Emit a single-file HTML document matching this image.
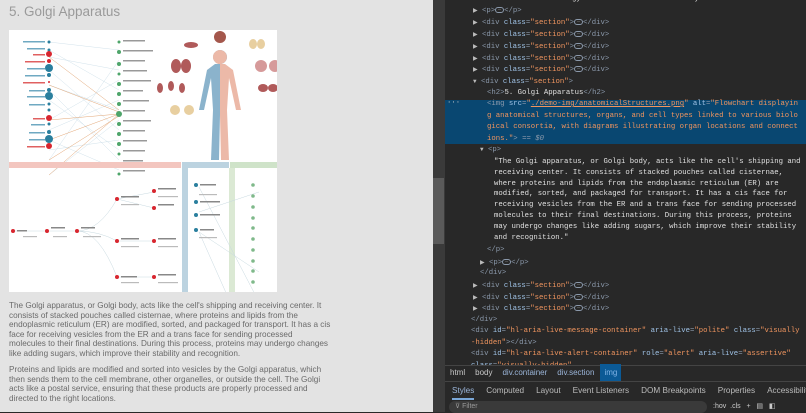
<!DOCTYPE html>
<html><head><meta charset="utf-8"><style>
*{margin:0;padding:0;box-sizing:border-box}
body{width:806px;height:412px;overflow:hidden;background:#282828;position:relative;font-family:"Liberation Sans",sans-serif}
#left{position:absolute;left:0;top:0;width:433px;height:412px;background:#e3e3e3;overflow:hidden}
h2{position:absolute;left:9px;top:4px;font-size:13.5px;font-weight:normal;color:#9a9a9a}
#img{position:absolute;left:9px;top:30px;width:268px;height:262px;background:#fff;overflow:hidden}
.p{position:absolute;left:9px;width:322px;font-size:8.2px;line-height:9.5px;color:#6a6a6a}
#sb{position:absolute;left:433px;top:0;width:12px;height:412px;background:#3a3a3a}
#thumb{position:absolute;left:433px;top:178px;width:11px;height:66px;background:#5a5a5a}
#dt{position:absolute;left:445px;top:0;width:361px;height:412px;background:#282828}
.l{position:absolute;font-family:"Liberation Mono",monospace;font-size:7.3px;line-height:11.7px;color:#c8c8c8;white-space:pre}
.g{color:#8b99ab}.a{color:#9fc2e6}.v{color:#f0955f}.w{color:#e0e0e0}
.e{display:inline-block;width:9px;height:6px;border:1px solid #8b99ab;border-radius:3px;vertical-align:middle;font-size:5px;line-height:3px;text-align:center;color:#aaa}
.tri{color:#bbb;font-size:6px}
</style></head><body>
<div id="left">
<h2>5. Golgi Apparatus</h2>
<div id="img">
<svg width="268" height="262" viewBox="0 0 268 262" xmlns="http://www.w3.org/2000/svg">
<g stroke="#c7dbe6" stroke-width="0.4" fill="none">
<path d="M40 12 L110 20 M40 20 L110 60 M40 27 L110 40 M40 40 L110 100 M40 55 L110 80 M40 70 L110 120 M40 90 L110 50 M40 110 L110 140 M40 130 L110 30 M40 145 L110 90 M40 60 L110 130 M40 100 L110 70 M40 120 L110 110"/>
</g>
<g stroke="#e3a777" stroke-width="0.5" fill="none">
<path d="M40 27 L110 80 M40 55 L110 82 M40 90 L110 84 M40 110 L110 84 M40 130 L110 86 M40 145 L110 84"/>
</g>
<g fill="#2a7f9e"><circle cx="40" cy="12" r="1.5"/><circle cx="40" cy="20" r="1.5"/><circle cx="40" cy="38" r="4"/><circle cx="40" cy="45" r="2"/><circle cx="40" cy="60" r="2"/><circle cx="40" cy="66" r="4"/><circle cx="40" cy="74" r="1.5"/><circle cx="40" cy="80" r="1.5"/><circle cx="40" cy="94" r="1.5"/><circle cx="40" cy="102" r="2"/><circle cx="40" cy="109" r="4"/></g>
<g fill="#d8262f"><circle cx="40" cy="24" r="3"/><circle cx="40" cy="31" r="2"/><circle cx="40" cy="52" r="1"/><circle cx="40" cy="88" r="3"/><circle cx="40" cy="116" r="3"/></g>
<g fill="#4ea56a"><circle cx="110" cy="12" r="1.5"/><circle cx="110" cy="22" r="2"/><circle cx="110" cy="34" r="2"/><circle cx="110" cy="44" r="1.5"/><circle cx="110" cy="54" r="2"/><circle cx="110" cy="64" r="2"/><circle cx="110" cy="74" r="2"/><circle cx="110" cy="84" r="3"/><circle cx="110" cy="94" r="2"/><circle cx="110" cy="104" r="2"/><circle cx="110" cy="114" r="2"/><circle cx="110" cy="124" r="1.5"/><circle cx="110" cy="134" r="2"/><circle cx="110" cy="144" r="1.5"/></g>
<g fill="#6fa9c2"><rect x="14" y="11" width="22" height="1.5"/><rect x="18" y="18" width="18" height="1.5"/><rect x="18" y="38" width="18" height="1.5"/><rect x="16" y="45" width="20" height="1.5"/><rect x="20" y="60" width="16" height="1.5"/><rect x="18" y="66" width="18" height="1.5"/><rect x="20" y="74" width="16" height="1.5"/><rect x="22" y="94" width="14" height="1.5"/><rect x="20" y="102" width="16" height="1.5"/><rect x="20" y="109" width="16" height="1.5"/></g>
<g fill="#e06060"><rect x="24" y="24" width="12" height="1.5"/><rect x="16" y="31" width="20" height="1.5"/><rect x="14" y="52" width="22" height="1.5"/><rect x="24" y="88" width="12" height="1.5"/><rect x="18" y="116" width="18" height="1.5"/></g>
<g fill="#999"><rect x="114" y="10" width="22" height="1.5"/><rect x="114" y="20" width="30" height="1.5"/><rect x="114" y="30" width="22" height="1.5"/><rect x="114" y="40" width="24" height="1.5"/><rect x="114" y="50" width="28" height="1.5"/><rect x="114" y="60" width="20" height="1.5"/><rect x="114" y="70" width="26" height="1.5"/><rect x="114" y="80" width="22" height="1.5"/><rect x="114" y="90" width="28" height="1.5"/><rect x="114" y="100" width="22" height="1.5"/><rect x="114" y="110" width="24" height="1.5"/><rect x="114" y="120" width="22" height="1.5"/><rect x="114" y="130" width="20" height="1.5"/><rect x="114" y="140" width="22" height="1.5"/></g>
<g transform="translate(-8,0)">
<path d="M219 20 a7 7 0 1 0 .1 0 Z M214 34 L206 40 L198 80 L203 80 L210 48 L212 80 L210 130 L218 130 L219 85 L219 34 Z" fill="#8bb3cc"/>
<path d="M219 20 a7 7 0 1 1 -.1 0 Z M224 34 L232 40 L240 80 L235 80 L228 48 L226 80 L228 130 L220 130 L219 85 L219 34 Z" fill="#ecb9a8"/>
<circle cx="219" cy="7" r="6" fill="#a4574c"/>
</g>
<g fill="#b05a5a"><ellipse cx="182" cy="15" rx="7" ry="3"/><ellipse cx="167" cy="36" rx="5" ry="7"/><ellipse cx="177" cy="36" rx="5" ry="7"/><ellipse cx="151" cy="58" rx="3" ry="5"/><ellipse cx="162" cy="56" rx="3" ry="5"/><ellipse cx="173" cy="58" rx="3" ry="5"/><ellipse cx="254" cy="58" rx="5" ry="4"/><ellipse cx="264" cy="58" rx="5" ry="4"/></g>
<g fill="#d69a9a"><ellipse cx="252" cy="36" rx="6" ry="6"/><ellipse cx="266" cy="36" rx="6" ry="6"/></g>
<g fill="#e8cfa0"><ellipse cx="244" cy="14" rx="4" ry="5"/><ellipse cx="252" cy="14" rx="4" ry="5"/><ellipse cx="166" cy="80" rx="5" ry="5"/><ellipse cx="180" cy="80" rx="5" ry="5"/></g>
<rect x="0" y="132" width="172" height="6" fill="#f3c6bf"/>
<rect x="173" y="132" width="47" height="6" fill="#bcd3e0"/>
<rect x="221" y="132" width="47" height="6" fill="#cfe3c9"/>
<rect x="173" y="138" width="6" height="124" fill="#bcd3e0"/>
<rect x="220" y="138" width="6" height="124" fill="#dbe9d4"/>
<g transform="translate(0,122)">
<g stroke="#c8d9e0" stroke-width="0.5" fill="none">
<path d="M4 79 L68 79 Q90 79 108 47 M68 79 Q90 79 108 89 M68 79 Q90 79 108 125 M108 47 L145 40 M108 47 L145 56 M108 89 L145 89 M108 125 L145 125 M190 60 L250 40 M190 80 L250 120 M190 35 L250 150 M190 80 L250 215"/>
</g>
<g fill="#d8262f"><circle cx="4" cy="79" r="2"/><circle cx="38" cy="79" r="2"/><circle cx="68" cy="79" r="2"/><circle cx="108" cy="47" r="2"/><circle cx="108" cy="89" r="2"/><circle cx="108" cy="125" r="2"/><circle cx="145" cy="39" r="2"/><circle cx="145" cy="56" r="2"/><circle cx="145" cy="89" r="2"/><circle cx="145" cy="125" r="2"/></g>
<g fill="#2a7f9e"><circle cx="187" cy="33" r="2"/><circle cx="187" cy="50" r="2"/><circle cx="187" cy="63" r="2"/><circle cx="187" cy="78" r="2"/></g>
<g fill="#7fb98a"><circle cx="244" cy="33" r="1.8"/><circle cx="244" cy="44" r="1.8"/><circle cx="244" cy="55" r="1.8"/><circle cx="244" cy="66" r="1.8"/><circle cx="244" cy="76" r="1.8"/><circle cx="244" cy="87" r="1.8"/><circle cx="244" cy="98" r="1.8"/><circle cx="244" cy="109" r="1.8"/><circle cx="244" cy="119" r="1.8"/><circle cx="244" cy="130" r="1.8"/></g>
<g fill="#888"><rect x="8" y="78" width="10" height="1.5"/><rect x="42" y="75" width="14" height="1.5"/><rect x="72" y="75" width="14" height="1.5"/><rect x="112" y="44" width="18" height="1.5"/><rect x="112" y="86" width="18" height="1.5"/><rect x="112" y="124" width="16" height="1.5"/><rect x="149" y="36" width="18" height="1.5"/><rect x="149" y="52" width="16" height="1.5"/><rect x="149" y="86" width="18" height="1.5"/><rect x="149" y="122" width="18" height="1.5"/><rect x="191" y="32" width="16" height="1.5"/><rect x="191" y="49" width="20" height="1.5"/><rect x="191" y="62" width="20" height="1.5"/><rect x="191" y="77" width="14" height="1.5"/></g>
<g fill="#bbb"><rect x="14" y="84" width="14" height="1.2"/><rect x="44" y="84" width="14" height="1.2"/><rect x="74" y="84" width="18" height="1.2"/><rect x="112" y="52" width="18" height="1.2"/><rect x="112" y="94" width="18" height="1.2"/><rect x="112" y="130" width="18" height="1.2"/><rect x="149" y="44" width="20" height="1.2"/><rect x="149" y="94" width="20" height="1.2"/><rect x="149" y="130" width="20" height="1.2"/><rect x="190" y="42" width="18" height="1.2"/><rect x="190" y="85" width="18" height="1.2"/></g>
</g>
</svg>
</div>
<div class="p" style="top:301px">The Golgi apparatus, or Golgi body, acts like the cell's shipping and receiving center. It consists of stacked pouches called cisternae, where proteins and lipids from the endoplasmic reticulum (ER) are modified, sorted, and packaged for transport. It has a cis face for receiving vesicles from the ER and a trans face for sending processed molecules to their final destinations. During this process, proteins may undergo changes like adding sugars, which improve their stability and recognition.</div>
<div class="p" style="top:365px">Proteins and lipids are modified and sorted into vesicles by the Golgi apparatus, which then sends them to the cell membrane, other organelles, or outside the cell. The Golgi acts like a postal service, ensuring that these products are properly processed and directed to the right locations.</div>
</div>
<div id="sb"></div><div id="thumb"></div>
<div id="dt">
<div style="position:absolute;left:0;top:100px;width:361px;height:44px;background:#094771"></div>
<div class="l" style="left:2px;top:98px;color:#ccc">···</div>
<div class="l" style="left:35px;top:-6px"><span class="g">&lt;h1&gt;</span><span class="w">Let's Learn Biology! Advanced Cellular Anatomy</span><span class="g">&lt;/h1&gt;</span></div>
<div class="l" style="left:28px;top:5px"><span class="tri">▶</span> <span class="g">&lt;p&gt;</span><span class="e">…</span><span class="g">&lt;/p&gt;</span></div>
<div class="l" style="left:28px;top:17px"><span class="tri">▶</span> <span class="g">&lt;div </span><span class="a">class</span><span class="g">=</span><span class="v">"section"</span><span class="g">&gt;</span><span class="e">…</span><span class="g">&lt;/div&gt;</span></div>
<div class="l" style="left:28px;top:29px"><span class="tri">▶</span> <span class="g">&lt;div </span><span class="a">class</span><span class="g">=</span><span class="v">"section"</span><span class="g">&gt;</span><span class="e">…</span><span class="g">&lt;/div&gt;</span></div>
<div class="l" style="left:28px;top:41px"><span class="tri">▶</span> <span class="g">&lt;div </span><span class="a">class</span><span class="g">=</span><span class="v">"section"</span><span class="g">&gt;</span><span class="e">…</span><span class="g">&lt;/div&gt;</span></div>
<div class="l" style="left:28px;top:53px"><span class="tri">▶</span> <span class="g">&lt;div </span><span class="a">class</span><span class="g">=</span><span class="v">"section"</span><span class="g">&gt;</span><span class="e">…</span><span class="g">&lt;/div&gt;</span></div>
<div class="l" style="left:28px;top:64px"><span class="tri">▶</span> <span class="g">&lt;div </span><span class="a">class</span><span class="g">=</span><span class="v">"section"</span><span class="g">&gt;</span><span class="e">…</span><span class="g">&lt;/div&gt;</span></div>
<div class="l" style="left:28px;top:76px"><span class="tri">▼</span> <span class="g">&lt;div </span><span class="a">class</span><span class="g">=</span><span class="v">"section"</span><span class="g">&gt;</span></div>
<div class="l" style="left:42px;top:88px"><span class="g">&lt;h2&gt;</span><span class="w">5. Golgi Apparatus</span><span class="g">&lt;/h2&gt;</span></div>
<div class="l" style="left:42px;top:99px"><span class="g">&lt;img </span><span class="a">src</span><span class="g">=</span><span class="v">"<u>./demo-img/anatomicalStructures.png</u>"</span> <span class="a">alt</span><span class="g">=</span><span class="v">"Flowchart displayin</span>
<span class="v">g anatomical structures, organs, and cell types linked to various biolo</span>
<span class="v">gical consortia, with diagrams illustrating organ locations and connect</span>
<span class="v">ions."</span><span class="g">&gt;</span> <span class="g" style="font-style:italic">== $0</span></div>
<div class="l" style="left:35px;top:144px"><span class="tri">▼</span> <span class="g">&lt;p&gt;</span></div>
<div class="l w" style="left:49px;top:157px;line-height:10.8px">"The Golgi apparatus, or Golgi body, acts like the cell's shipping and
receiving center. It consists of stacked pouches called cisternae,
where proteins and lipids from the endoplasmic reticulum (ER) are
modified, sorted, and packaged for transport. It has a cis face for
receiving vesicles from the ER and a trans face for sending processed
molecules to their final destinations. During this process, proteins
may undergo changes like adding sugars, which improve their stability
and recognition."</div>
<div class="l" style="left:42px;top:245px"><span class="g">&lt;/p&gt;</span></div>
<div class="l" style="left:35px;top:257px"><span class="tri">▶</span> <span class="g">&lt;p&gt;</span><span class="e">…</span><span class="g">&lt;/p&gt;</span></div>
<div class="l" style="left:35px;top:268px"><span class="g">&lt;/div&gt;</span></div>
<div class="l" style="left:28px;top:280px"><span class="tri">▶</span> <span class="g">&lt;div </span><span class="a">class</span><span class="g">=</span><span class="v">"section"</span><span class="g">&gt;</span><span class="e">…</span><span class="g">&lt;/div&gt;</span></div>
<div class="l" style="left:28px;top:292px"><span class="tri">▶</span> <span class="g">&lt;div </span><span class="a">class</span><span class="g">=</span><span class="v">"section"</span><span class="g">&gt;</span><span class="e">…</span><span class="g">&lt;/div&gt;</span></div>
<div class="l" style="left:28px;top:303px"><span class="tri">▶</span> <span class="g">&lt;div </span><span class="a">class</span><span class="g">=</span><span class="v">"section"</span><span class="g">&gt;</span><span class="e">…</span><span class="g">&lt;/div&gt;</span></div>
<div class="l" style="left:26px;top:315px"><span class="g">&lt;/div&gt;</span></div>
<div class="l" style="left:26px;top:326px"><span class="g">&lt;div </span><span class="a">id</span><span class="g">=</span><span class="v">"hl-aria-live-message-container"</span> <span class="a">aria-live</span><span class="g">=</span><span class="v">"polite"</span> <span class="a">class</span><span class="g">=</span><span class="v">"visually</span>
<span class="v">-hidden"</span><span class="g">&gt;&lt;/div&gt;</span></div>
<div class="l" style="left:26px;top:349px"><span class="g">&lt;div </span><span class="a">id</span><span class="g">=</span><span class="v">"hl-aria-live-alert-container"</span> <span class="a">role</span><span class="g">=</span><span class="v">"alert"</span> <span class="a">aria-live</span><span class="g">=</span><span class="v">"assertive"</span>
<span class="a">class</span><span class="g">=</span><span class="v">"visually-hidden"</span></div>
<div style="position:absolute;left:0;top:365px;width:361px;height:47px;background:#282828;border-top:1px solid #444"></div>
<div style="position:absolute;left:0;top:365px;width:361px;height:16px;font-size:8px;color:#c8c8c8;line-height:16px;white-space:nowrap">
<span style="margin-left:5px">html</span><span style="margin-left:10px">body</span><span style="margin-left:10px;color:#9ab4d8">div.container</span><span style="margin-left:10px;color:#9ab4d8">div.section</span><span style="margin-left:6px;background:#0b5a96;color:#7fb2e5;padding:4px 4px">img</span></div>
<div style="position:absolute;left:0;top:381px;width:361px;height:1px;background:#444"></div>
<div style="position:absolute;left:0;top:382px;width:361px;height:17px;font-size:8.2px;color:#bbb;line-height:17px;white-space:nowrap">
<span style="margin-left:7px;color:#9ab4d8;border-bottom:2px solid #7aa7d8;padding-bottom:3px">Styles</span><span style="margin-left:12px">Computed</span><span style="margin-left:12px">Layout</span><span style="margin-left:12px">Event Listeners</span><span style="margin-left:12px">DOM Breakpoints</span><span style="margin-left:12px">Properties</span><span style="margin-left:12px">Accessibility</span></div>
<div style="position:absolute;left:4px;top:401px;width:258px;height:12px;background:#3a3a3a;border-radius:6px;font-size:7px;color:#999;line-height:12px;padding-left:6px">⊽ Filter</div>
<div style="position:absolute;left:268px;top:401px;font-size:7px;color:#ccc;line-height:12px;white-space:nowrap">:hov &nbsp;.cls &nbsp; + &nbsp; ▤ &nbsp; ◧</div>
</div>
</body></html>
